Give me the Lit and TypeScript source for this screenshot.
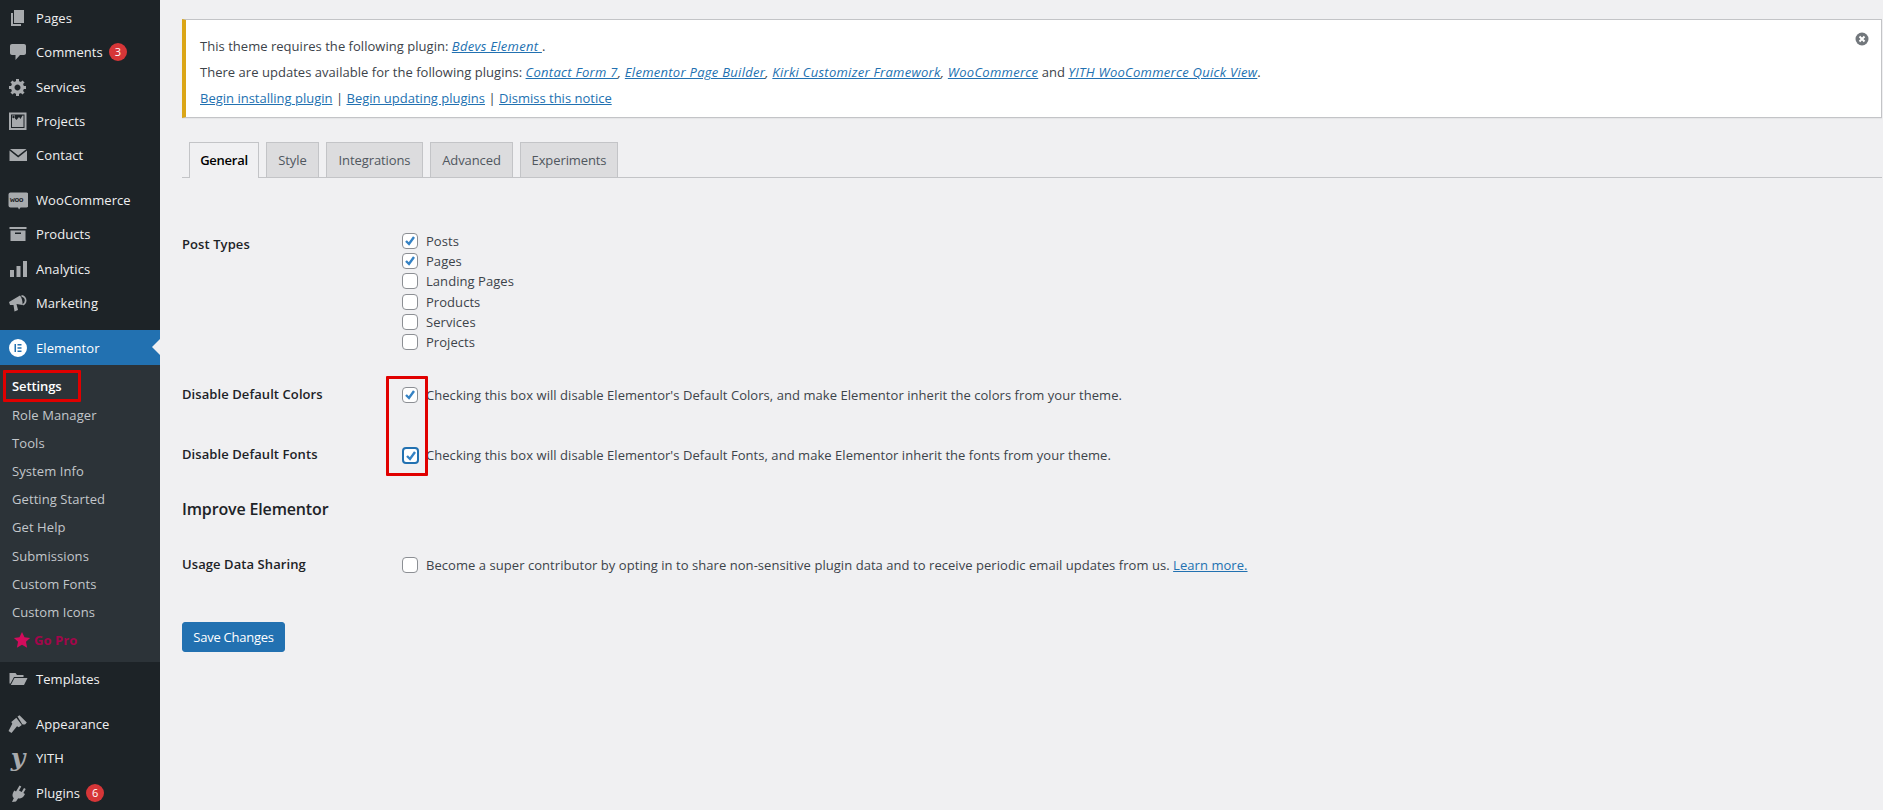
import { LitElement, html, css, svg } from "lit";
import { customElement } from "lit/decorators.js";

const icons: Record<string, any> = {
  pages: svg`<path d="M6 15V2h10v13H6zm-1 1h8v2H3V5h2v11z"/>`,
  comments: svg`<path d="M4 2h12c1.100 0 2 .9 2 2v7c0 1.100-.9 2-2 2h-4l-4.500 5v-5H4c-1.100 0-2-.9-2-2V4c0-1.100.9-2 2-2z"/>`,
  gear: svg`<path d="M18 12h-2.180c-.17.7-.44 1.350-.81 1.930l1.540 1.540-2.100 2.100-1.540-1.540c-.58.36-1.230.63-1.910.79V19H8v-2.180c-.68-.16-1.330-.43-1.910-.79l-1.540 1.540-2.120-2.120 1.540-1.540c-.36-.58-.63-1.230-.79-1.910H1V9.030h2.170c.16-.7.44-1.350.8-1.940L2.430 5.550l2.100-2.100 1.540 1.540c.58-.37 1.240-.64 1.930-.81V2h3v2.180c.68.16 1.330.43 1.910.79l1.540-1.540 2.120 2.120-1.540 1.540c.36.59.64 1.240.8 1.940H18V12zm-8.500 1.500c1.660 0 3-1.340 3-3s-1.340-3-3-3-3 1.340-3 3 1.340 3 3 3z"/>`,
  projects: svg`<path fill-rule="evenodd" d="M1 1.500h17.500V19H1zM3 3.500V17h13.500V3.500z"/><path d="M4 4.500h3v3l1.500 1.500 2.500-3 1.500 2 2-3.500h1V16H4z"/><circle cx="5.500" cy="6" r="1.200" fill="#1d2327"/>`,
  mail: svg`<path d="M2 4h16.500L10.200 10.600 2 4zm-.5 1.500l8.700 7 8.800-7V16H1.500V5.500z"/>`,
  woo: svg`<path d="M2.500 2.500h16c1 0 2 .9 2 2v11c0 1.100-1 2-2 2h-6l-1.500 2-1-2h-7.500c-1 0-2-.9-2-2v-11c0-1.100 1-2 2-2z"/>`,
  products: svg`<path fill-rule="evenodd" d="M1.500 3h17v2h-17zM2.500 6.500h15V17h-15zM7 8.500V10h6V8.500z"/>`,
  analytics: svg`<path d="M2 11h4v7H2zM8.500 7h4v11h-4zM15 2h4v16h-4z"/>`,
  marketing: svg`<path fill-rule="evenodd" d="M1 9l11-6.500c1.800 2 2.800 6 2.500 9.500L8.500 11l1.500 6-3.500 1.500L5.500 12 2 12zM13.500 2a5.500 5.500 0 0 1 5 5.500 5.500 5.500 0 0 1-3.500 5l-.5-1.500a4 4 0 0 0 2.300-3.500A4 4 0 0 0 13.500 3.700z"/>`,
  folder: svg`<path d="M1.500 4h6l1.500 2h6.500v2H6L2.500 14.500h-1zM6.500 9H19.500l-3.500 7H2.800z"/>`,
  brush: svg`<path d="M9.500 2.500l2-1.300 7.300 7.300-1.500 1.800c-1 .5-2 .2-3 0zM8.300 3.800l5.500 7.200-3 2.200-1.800-1-5.500 6.800-3-2 3.800-7.200-1-1.800z"/>`,
  plugin: svg`<path d="M11.500 2.500l1.800 1L11 7.500l2.700 1.500 2.300-4 1.700 1-2.300 4 1.600 1-1 1.700c-1.500 2.400-3.800 3.200-5.800 2.600L8 18.500 4 19l1.800-3.800C4.300 13.700 4 11.500 5.300 9.300l1-1.700 1.700 1z"/>`,
};

const top = [
  { t: "Pages", i: "pages" },
  { t: "Comments", i: "comments", b: "3" },
  { t: "Services", i: "gear" },
  { t: "Projects", i: "projects" },
  { t: "Contact", i: "mail" },
  { sep: 1 },
  { t: "WooCommerce", i: "woo", w: 1 },
  { t: "Products", i: "products" },
  { t: "Analytics", i: "analytics" },
  { t: "Marketing", i: "marketing" },
];
const subs = ["Role Manager", "Tools", "System Info", "Getting Started", "Get Help", "Submissions", "Custom Fonts", "Custom Icons"];
const bottom = [
  { t: "Templates", i: "folder" },
  { sep: 1 },
  { t: "Appearance", i: "brush" },
  { t: "YITH", y: 1 },
  { t: "Plugins", i: "plugin", b: "6" },
];
const tabs: [string, number][] = [["General", 70], ["Style", 53], ["Integrations", 97], ["Advanced", 83], ["Experiments", 98]];
const types: [string, boolean][] = [["Posts", true], ["Pages", true], ["Landing Pages", false], ["Products", false], ["Services", false], ["Projects", false]];

@customElement("app-root")
export class AppRoot extends LitElement {
  static styles = css`
    :host { display: flex; width: 1883px; height: 810px; overflow: hidden; position: relative; background: #f0f0f2; color: #3c434a; font: 13px/1.4 "Open Sans", "Noto Sans", sans-serif; letter-spacing: 0.05px; }
    .side { width: 160px; flex: none; background: #1d2327; color: #f0f0f1; padding-top: 1px; letter-spacing: 0.08px; }
    .item { display: flex; align-items: center; height: 34.300px; }
    .ico { width: 36px; flex: none; display: flex; justify-content: center; position: relative; }
    .ico svg { width: 20px; height: 20px; fill: #a7aaad; }
    .woo-t { position: absolute; left: 10px; top: 3px; font: 700 8px/13px "Liberation Mono", monospace; color: #1d2327; letter-spacing: -0.4px; }
    .yith { font: italic 700 25px/20px "DejaVu Serif", serif; color: #a7aaad; width: 20px; text-align: center; letter-spacing: 0; }
    .badge { margin-left: 6px; width: 18px; height: 18px; border-radius: 50%; background: #d63638; color: #fff; font-size: 11px; line-height: 18px; text-align: center; letter-spacing: 0; }
    .sep { height: 10.500px; }
    .bottom .sep { height: 11px; }
    .active { background: #2271b1; color: #fff; height: 35px; box-sizing: border-box; padding-top: 1px; position: relative; margin-top: 9.500px; }
    .arrow { position: absolute; right: 0; top: 9px; width: 0; height: 0; border: 8px solid transparent; border-right-color: #f0f0f2; border-left: 0; }
    .ico svg.eicon { fill: #fff; }
    .subs { background: #2c3338; padding: 7.500px 0 8px; height: 297px; box-sizing: border-box; color: #c3c7cb; }
    .sub { height: 28.200px; display: flex; align-items: center; padding-left: 12px; }
    .sub.cur { color: #fff; font-weight: 600; height: 28.400px; letter-spacing: -0.1px; }
    .gopro { color: #a3064a; font-weight: 700; gap: 3px; padding-left: 13px; }
    .gopro svg { width: 18px; height: 18px; fill: #d30c5c; }
    .main { flex: 1; min-width: 0; padding: 19px 1px 0 22px; }
    .notice { background: #fff; border: 1px solid #c3c4c7; border-left: 4px solid #dba617; padding: 13px 14px 5px 14px; height: 99px; box-sizing: border-box; position: relative; line-height: 26px; box-shadow: 0 1px 1px rgba(0,0,0,.04); letter-spacing: 0.03px; }
    .notice a, .learn { color: #2271b1; text-decoration: underline; }
    .notice i { letter-spacing: 0.28px; }
    .notice a { letter-spacing: 0; }
    .notice i a { font-style: italic; letter-spacing: 0.28px; }
    .close { position: absolute; right: 12px; top: 12px; width: 14px; height: 14px; }
    .close svg { width: 14px; height: 14px; display: block; }
    .tabs { display: flex; gap: 7px; margin-top: 24px; padding-left: 7px; border-bottom: 1px solid #c3c4c7; height: 35px; }
    .tab { height: 35px; box-sizing: border-box; border: 1px solid #c3c4c7; border-bottom: 0; background: #dcdcde; color: #50575e; font-weight: 500; line-height: 34px; text-align: center; letter-spacing: -0.1px; }
    .tab.on { background: #f0f0f2; color: #000; font-weight: 600; letter-spacing: -0.25px; height: 36px; margin-bottom: -1px; }
    .row { display: grid; grid-template-columns: 220px 1fr; }
    .row .lab { font-weight: 600; color: #1d2327; letter-spacing: 0.08px; }
    .r1 { margin-top: 53px; }
    .r1 .lab { padding-top: 4px; }
    .list { display: flex; flex-direction: column; }
    .opt { display: flex; align-items: center; height: 20.200px; gap: 8px; }
    .r2 { margin-top: 33px; }
    .r3 { margin-top: 41px; }
    .r4 { margin-top: 34px; }
    .val { display: flex; align-items: center; gap: 8px; padding-top: 1px; }
    .cb { width: 16px; height: 16px; box-sizing: border-box; border: 1px solid #8c8f94; border-radius: 4px; background: #fff; flex: none; display: block; }
    .cb svg { width: 14px; height: 14px; display: block; }
    .cb.focus { border: 2px solid #2271b1; width: 17px; height: 17px; margin-left: -0.5px; margin-right: -0.5px; }
    h2 { margin: 32px 0 0; font-size: 16px; font-weight: 600; line-height: 24px; color: #1d2327; letter-spacing: -0.15px; }
    .save { margin-top: 48px; display: block; width: 103px; height: 30px; background: #2271b1; color: #fff; border: 1px solid #2271b1; border-radius: 3px; font: inherit; letter-spacing: -0.25px; padding: 1px 0 0; }
    .mark { position: absolute; border: 3px solid #e00000; box-sizing: border-box; border-radius: 1px; pointer-events: none; }
    .m1 { left: 3px; top: 370px; width: 78px; height: 32px; }
    .m2 { left: 386px; top: 376px; width: 42px; height: 100px; }
  `;

  private cb(on: boolean, focus = false) {
    return html`<span class="cb ${focus ? "focus" : ""}">${on ? html`<svg viewBox="0 0 14 14"><path d="M3 7l3 3 5-7" fill="none" stroke="#3582c4" stroke-width="2.400"/></svg>` : ""}</span>`;
  }

  private item(m: any) {
    if (m.sep) return html`<div class="sep"></div>`;
    return html`<div class="item">
      <span class="ico">
        ${m.y ? html`<span class="yith">y</span>` : html`<svg viewBox="0 0 20 20">${icons[m.i]}</svg>`}
        ${m.w ? html`<span class="woo-t">woo</span>` : ""}
      </span>
      <span>${m.t}</span>
      ${m.b ? html`<span class="badge">${m.b}</span>` : ""}
    </div>`;
  }

  render() {
    return html`
      <nav class="side">
        ${top.map((m) => this.item(m))}
        <div class="item active">
          <span class="ico"><svg class="eicon" viewBox="0 0 20 20"><path fill-rule="evenodd" d="M10 1a9 9 0 1 1 0 18 9 9 0 0 1 0-18zM6.500 6v8H8V6zM9.500 6v1.500h4V6zM9.500 9.200v1.600h4V9.200zM9.500 12.500V14h4v-1.500z"/></svg></span>
          <span>Elementor</span><span class="arrow"></span>
        </div>
        <div class="subs">
          <div class="sub cur">Settings</div>
          ${subs.map((s) => html`<div class="sub">${s}</div>`)}
          <div class="sub gopro"><svg viewBox="0 0 20 20"><path d="M10 1l2.800 6 6.200.7-4.600 4.300 1.300 6.500L10 15.200 4.300 18.500 5.600 12 1 7.700 7.200 7z"/></svg><span>Go Pro</span></div>
        </div>
        <div class="bottom">${bottom.map((m) => this.item(m))}</div>
      </nav>
      <main class="main">
        <div class="notice">
          <div>This theme requires the following plugin: <i><a>Bdevs Element </a></i>.</div>
          <div>There are updates available for the following plugins: <i><a>Contact Form 7</a>, <a>Elementor Page Builder</a>, <a>Kirki Customizer Framework</a>, <a>WooCommerce</a></i> and <i><a>YITH WooCommerce Quick View</a></i>.</div>
          <div><a>Begin installing plugin</a> | <a>Begin updating plugins</a> | <a>Dismiss this notice</a></div>
          <span class="close"><svg viewBox="0 0 14 14"><circle cx="7" cy="7" r="6.500" fill="#72777c"/><path d="M4.500 4.500l5 5M9.500 4.500l-5 5" stroke="#fff" stroke-width="2"/></svg></span>
        </div>
        <div class="tabs">${tabs.map(([t, w], i) => html`<div class="tab ${i === 0 ? "on" : ""}" style="width:${w}px">${t}</div>`)}</div>
        <div class="row r1">
          <div class="lab">Post Types</div>
          <div class="list">${types.map(([t, on]) => html`<div class="opt">${this.cb(on)}<span>${t}</span></div>`)}</div>
        </div>
        <div class="row r2">
          <div class="lab">Disable Default Colors</div>
          <div class="val">${this.cb(true)}<span>Checking this box will disable Elementor's Default Colors, and make Elementor inherit the colors from your theme.</span></div>
        </div>
        <div class="row r3">
          <div class="lab">Disable Default Fonts</div>
          <div class="val">${this.cb(true, true)}<span>Checking this box will disable Elementor's Default Fonts, and make Elementor inherit the fonts from your theme.</span></div>
        </div>
        <h2>Improve Elementor</h2>
        <div class="row r4">
          <div class="lab">Usage Data Sharing</div>
          <div class="val">${this.cb(false)}<span>Become a super contributor by opting in to share non-sensitive plugin data and to receive periodic email updates from us. <a class="learn">Learn more.</a></span></div>
        </div>
        <button class="save">Save Changes</button>
      </main>
      <div class="mark m1"></div>
      <div class="mark m2"></div>
    `;
  }
}
